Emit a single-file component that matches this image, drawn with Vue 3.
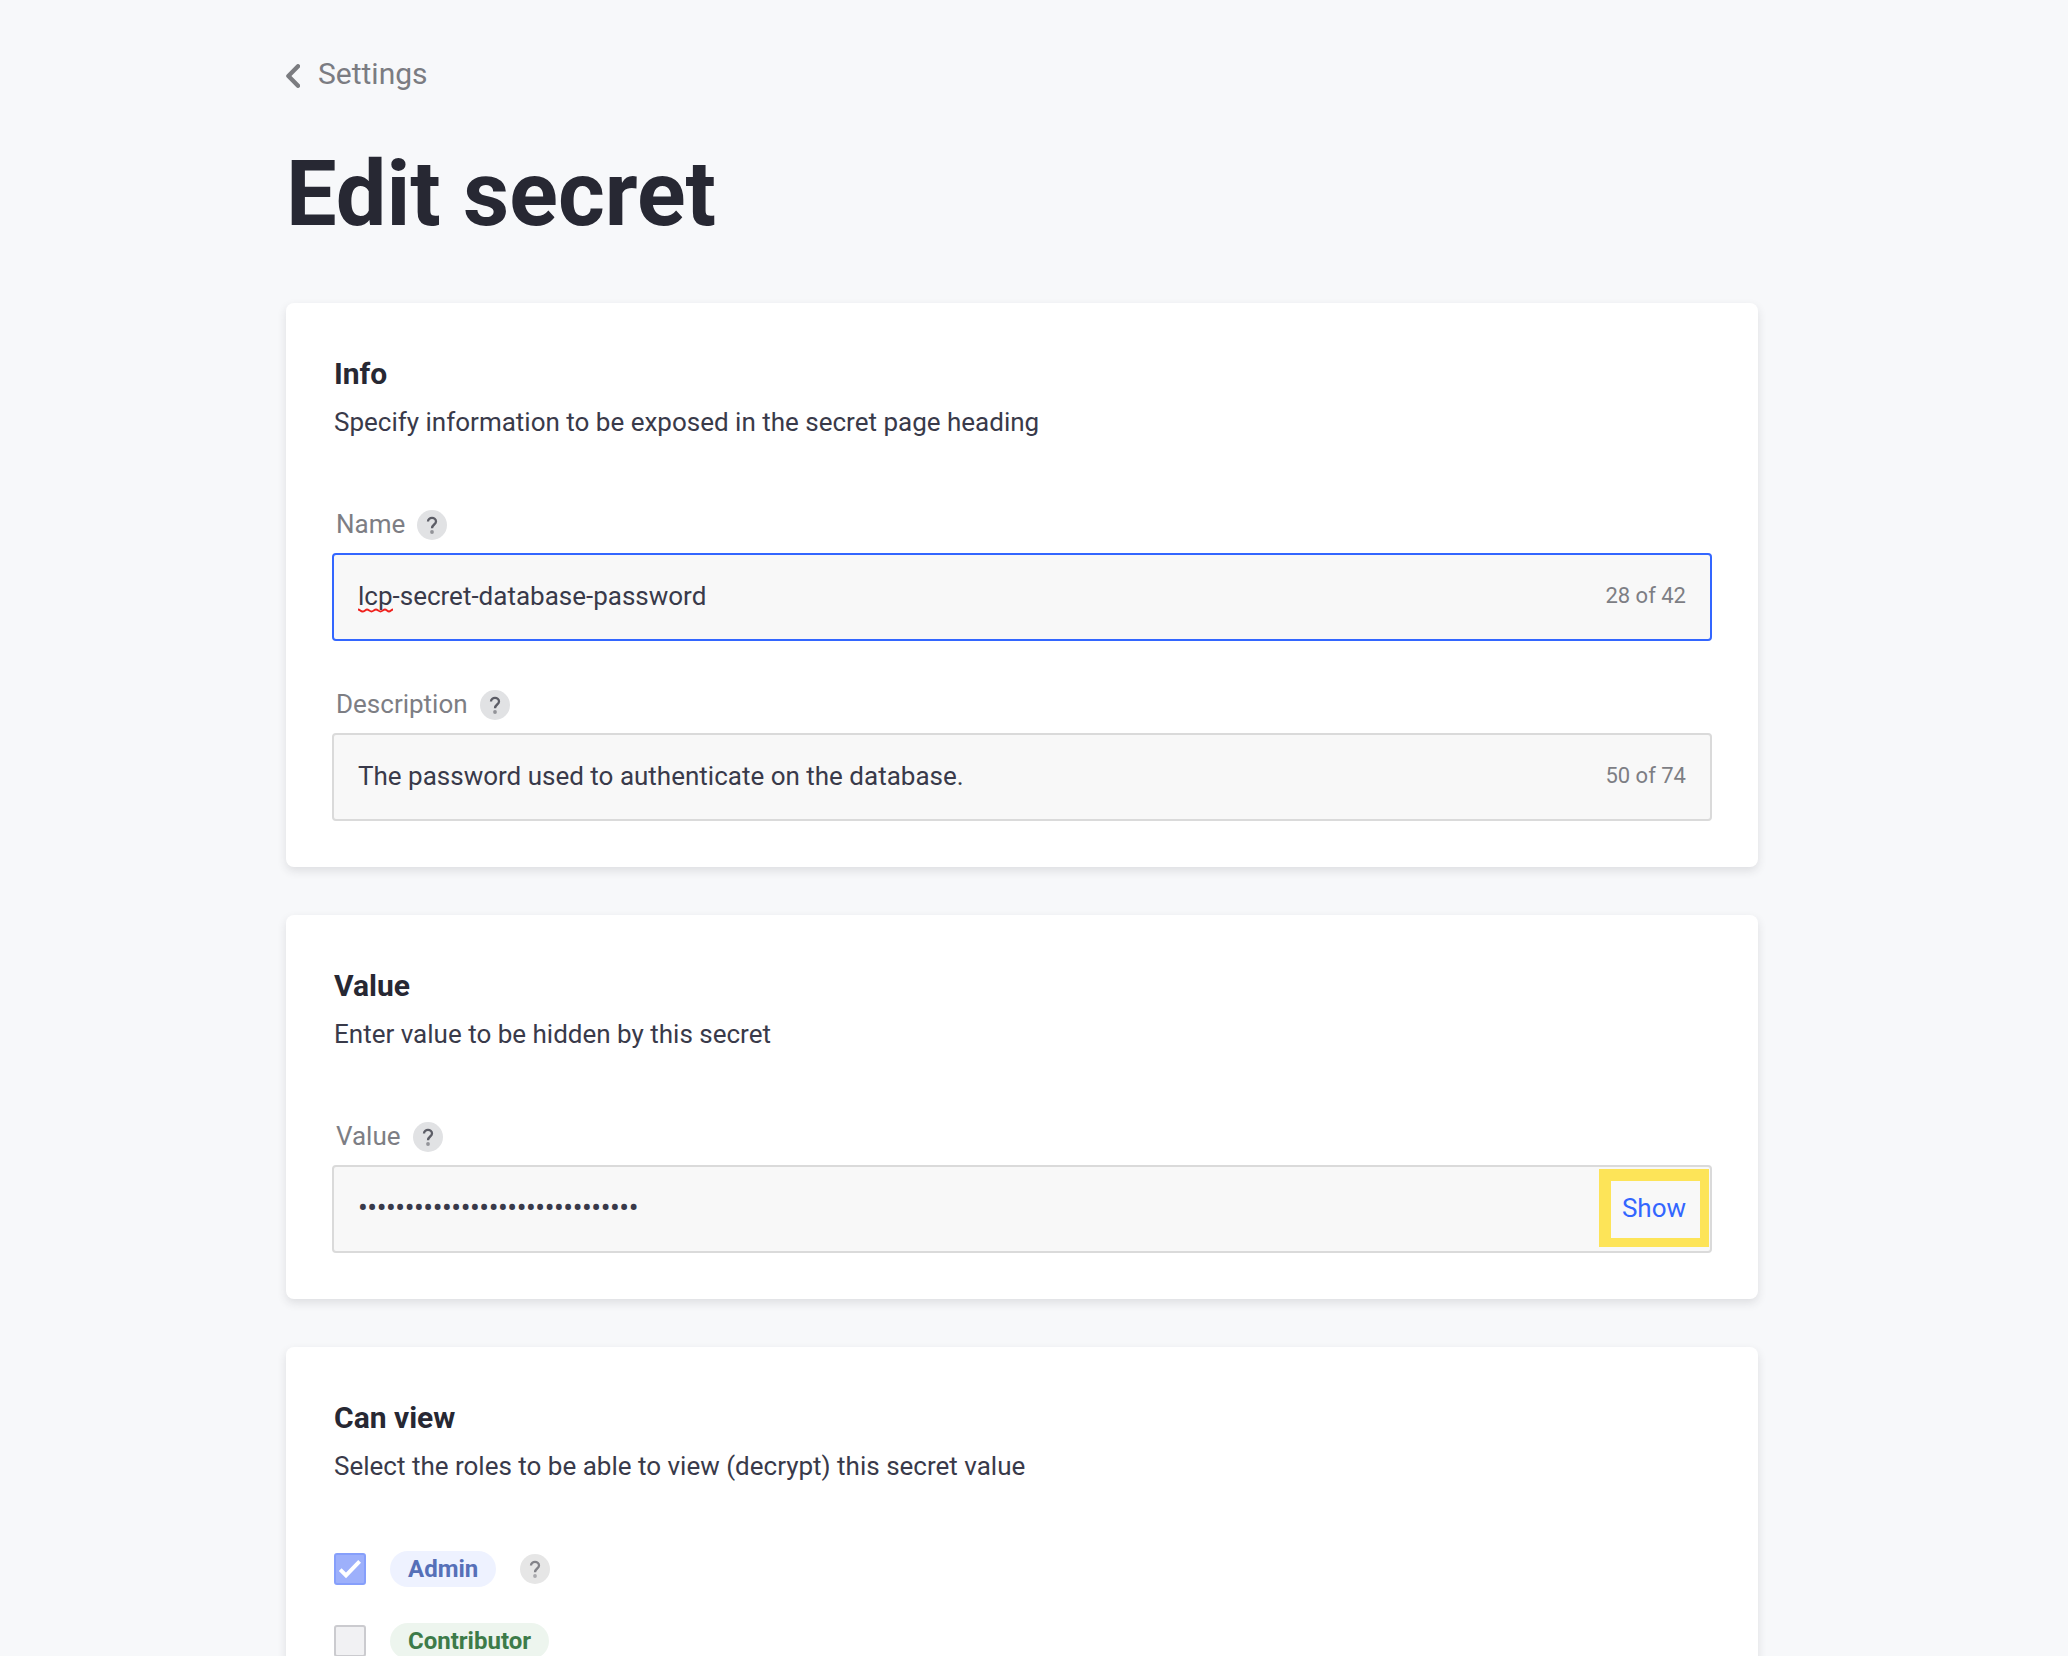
<script setup>
const infoFields = [
  { label: 'Name', flagged: 'lcp', value: '-secret-database-password', count: '28 of 42', focused: true },
  { label: 'Description', flagged: '', value: 'The password used to authenticate on the database.', count: '50 of 74', focused: false },
]
const secret = '•'.repeat(30)
const roles = [
  { name: 'Admin', kind: 'admin', checked: true, help: true },
  { name: 'Contributor', kind: 'contributor', checked: false, help: false },
]
</script>

<template>
  <main class="page">
    <a class="back">
      <svg width="14" height="24" viewBox="0 0 14 24"><path d="M12 2.3 2.4 12 12 21.7" fill="none" stroke="#7b7c80" stroke-width="4.4" stroke-linecap="round" stroke-linejoin="round" /></svg>
      <span>Settings</span>
    </a>
    <h1>Edit secret</h1>

    <section class="card">
      <h2>Info</h2>
      <p class="sub">Specify information to be exposed in the secret page heading</p>
      <div v-for="f in infoFields" :key="f.label" class="field">
        <div class="label"><span>{{ f.label }}</span>
          <svg class="help" viewBox="0 0 30 30"><circle cx="15" cy="15" r="15" fill="#e1e2e4" /><path d="M11 11.6C11 6.7 19 6.8 19 11.6C19 14.5 15 14.6 15 18.2" fill="none" stroke="#5c5d66" stroke-width="2.3" /><circle cx="15" cy="22" r="1.9" fill="#929398" /></svg>
        </div>
        <div class="input" :class="{ focused: f.focused }">
          <span class="text"><span v-if="f.flagged" class="flagged">{{ f.flagged }}<svg class="squiggle" width="35" height="5" viewBox="0 0 35 5"><path d="M0 1.5C2 1.5 2.5 3.5 4.5 3.5S7.5 1.5 9 1.5S12 3.5 13.5 3.5S16.5 1.5 18 1.5S21 3.5 22.5 3.5S25.5 1.5 27 1.5S29.5 3.5 31 3.5S33.5 1.5 35 1.5" fill="none" stroke="#f0201c" stroke-width="1.9" /></svg></span>{{ f.value }}</span>
          <span class="count">{{ f.count }}</span>
        </div>
      </div>
    </section>

    <section class="card">
      <h2>Value</h2>
      <p class="sub">Enter value to be hidden by this secret</p>
      <div class="field">
        <div class="label"><span>Value</span>
          <svg class="help" viewBox="0 0 30 30"><circle cx="15" cy="15" r="15" fill="#e1e2e4" /><path d="M11 11.6C11 6.7 19 6.8 19 11.6C19 14.5 15 14.6 15 18.2" fill="none" stroke="#5c5d66" stroke-width="2.3" /><circle cx="15" cy="22" r="1.9" fill="#929398" /></svg>
        </div>
        <div class="input">
          <span class="text dots">{{ secret }}</span>
          <span class="show">Show</span>
          <span class="highlight"></span>
        </div>
      </div>
    </section>

    <section class="card last">
      <h2>Can view</h2>
      <p class="sub">Select the roles to be able to view (decrypt) this secret value</p>
      <div class="roles">
        <div v-for="r in roles" :key="r.name" class="role">
          <span class="box" :class="{ checked: r.checked }">
            <svg v-if="r.checked" width="32" height="32" viewBox="0 0 32 32"><path d="M6.2 16.6 12 22.4 25.6 8.3" fill="none" stroke="#fff" stroke-width="3.9" /></svg>
          </span>
          <span class="pill" :class="r.kind">{{ r.name }}</span>
          <svg v-if="r.help" class="help" viewBox="0 0 30 30"><circle cx="15" cy="15" r="15" fill="#e6e6e6" /><path d="M11 11.6C11 6.7 19 6.8 19 11.6C19 14.5 15 14.6 15 18.2" fill="none" stroke="#828288" stroke-width="2.3" /><circle cx="15" cy="22" r="1.9" fill="#a9a9ad" /></svg>
        </div>
      </div>
    </section>
  </main>
</template>

<style>
body { background: #f7f8fa; overflow: hidden; }
</style>

<style scoped>
.page {
  box-sizing: border-box;
  width: 1472px;
  height: 1656px;
  margin-left: 286px;
  padding-top: 54px;
  font-family: Roboto, sans-serif;
  color: #393a4a;
}
svg { display: block; }
.back { display: flex; gap: 18px; height: 40px; line-height: 39px; font-size: 30px; color: #7b7c82; }
.back svg { margin-top: 10px; }
h1 { margin: 50px 0 0; height: 109px; line-height: 101px; font-size: 90px; font-weight: 700; color: #272833; }
.card {
  box-sizing: border-box;
  margin: 50px 0 48px;
  padding: 51px 46px 46px;
  background: #fff;
  border-radius: 8px;
  box-shadow: 0 4px 10px rgba(39, 40, 51, 0.12);
}
.card + .card { margin-top: 0; }
.card.last { margin-bottom: 0; }
h2 { margin: 0 2px; font-size: 30px; line-height: 39px; font-weight: 700; color: #272833; }
.sub { margin: 11px 2px 70px; font-size: 26px; line-height: 36px; }
.field + .field { margin-top: 49px; }
.label { display: flex; gap: 12px; height: 30px; margin: 0 4px 13px; font-size: 26px; line-height: 28px; color: #7d7e84; }
.help { width: 30px; height: 30px; flex: none; }
.input {
  position: relative;
  display: flex;
  justify-content: space-between;
  box-sizing: border-box;
  height: 88px;
  padding: 0 24px;
  border: 2px solid #dadada;
  border-radius: 4px;
  background: #f8f8f8;
  font-size: 26px;
  line-height: 82px;
}
.input.focused { border-color: #3366ff; }
.flagged { position: relative; }
.squiggle { position: absolute; left: 0; bottom: -2px; }
.count { font-size: 22px; line-height: 81px; color: #7d7e84; }
.dots { font-size: 29px; letter-spacing: -0.45px; }
.show { color: #3366ff; }
.highlight {
  position: absolute;
  top: 2px;
  right: 1px;
  width: 89px;
  height: 57px;
  border: solid #fde458;
  border-width: 12px 9px 9px 12px;
}
.roles { display: flex; flex-direction: column; gap: 36px; margin: -3px 2px 0; }
.role { display: flex; align-items: center; height: 36px; }
.box { box-sizing: border-box; width: 32px; height: 32px; border: 2px solid #cbcbcf; border-radius: 3px; background: #f1f1f3; }
.box.checked { border-color: #869ffb; background: #9db0fb; }
.box svg { margin: -2px; }
.pill { margin: 0 24px; padding: 0 18px; height: 36px; line-height: 36px; border-radius: 18px; font-size: 24px; font-weight: 700; }
.admin { background: #eef2ff; color: #5670b8; }
.contributor { background: #edf5ee; color: #3d7b49; }
</style>
